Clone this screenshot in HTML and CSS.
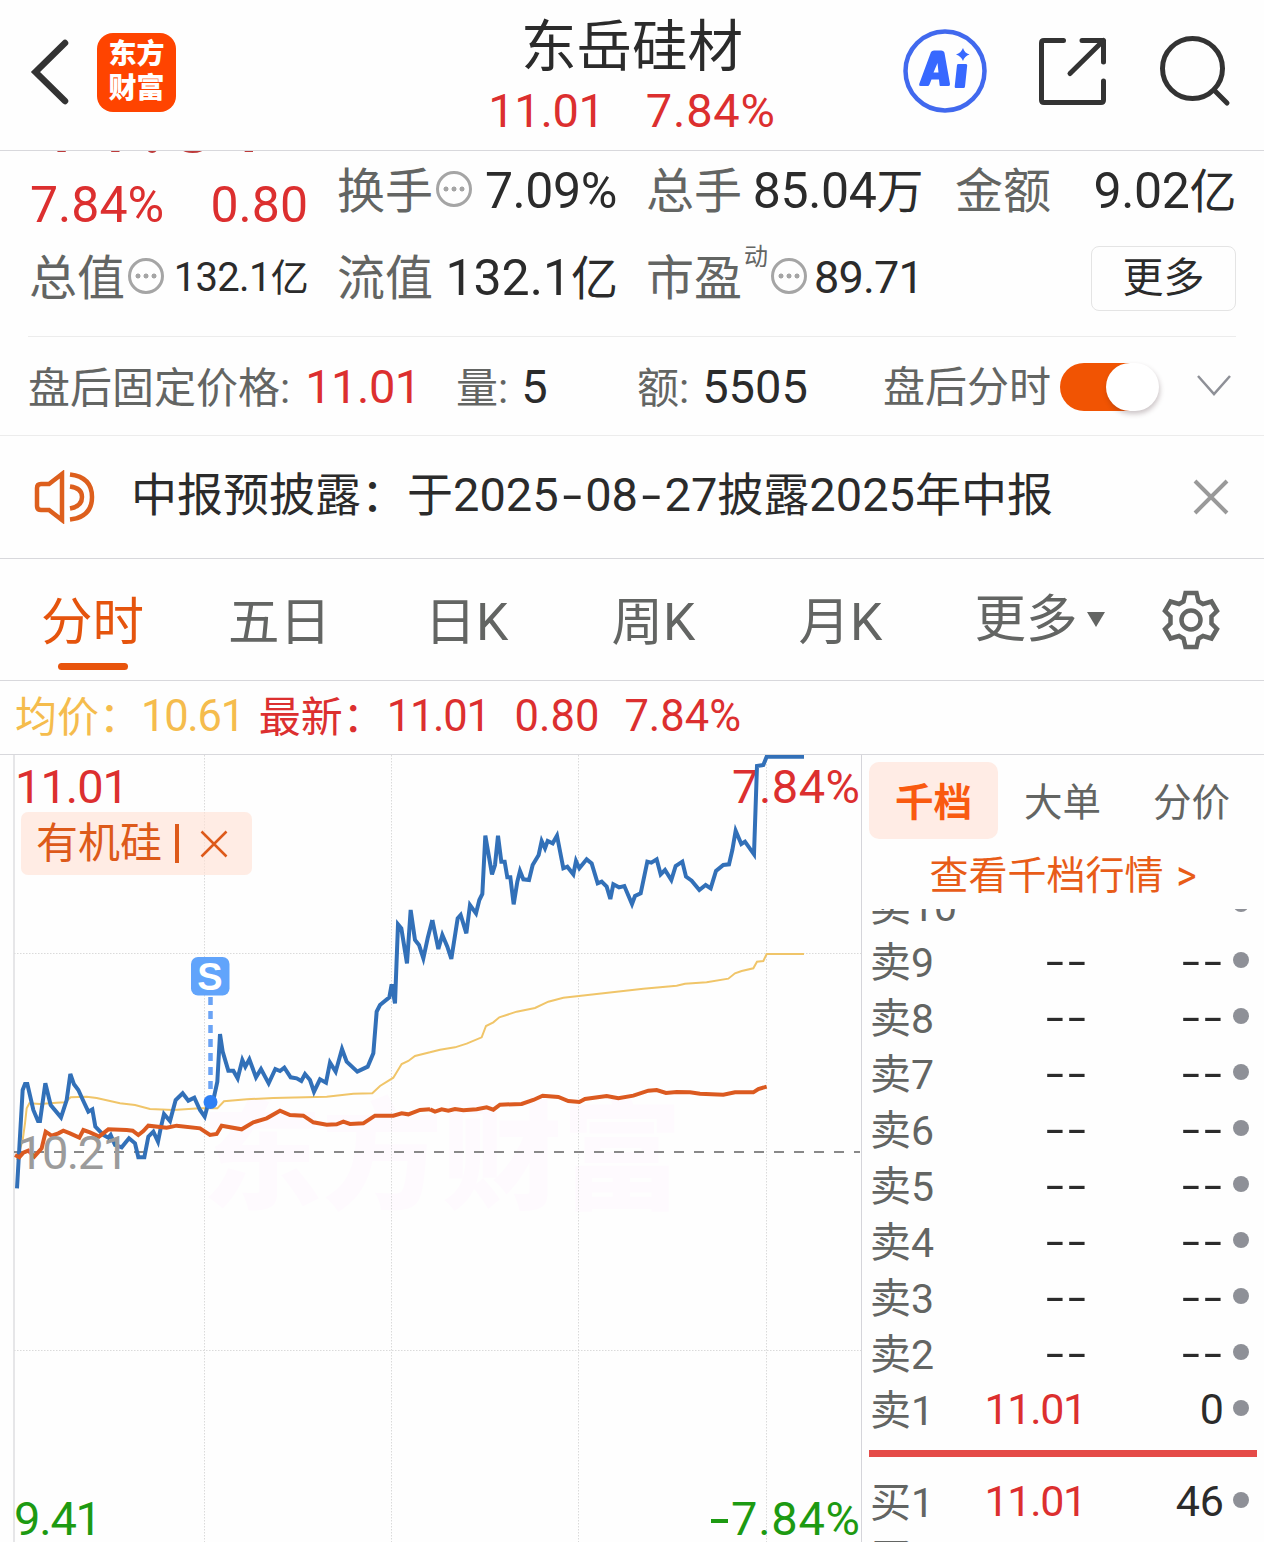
FILE: index.html
```html
<!DOCTYPE html>
<html lang="zh-CN">
<head>
  <meta charset="UTF-8">
  <title>东岳硅材</title>
  <link rel="stylesheet" href="styles.css">
</head>
<body>
  <header class="header">
    <div class="header-left">
      <svg class="back" width="40" height="66" viewBox="0 0 40 66"><path d="M35 4L5.500 33L35 62" fill="none" stroke="#333" stroke-width="6.500" stroke-linecap="round"/></svg>
      <div class="logo"><span>东方</span><span>财富</span></div>
    </div>
    <div class="title">
      <h1>东岳硅材</h1>
      <div class="title-price"><span class="ones">11.01</span><span>7.84%</span></div>
    </div>
    <div class="header-right">
      <svg width="84" height="84" viewBox="0 0 84 84">
        <circle cx="42" cy="42" r="39.5" fill="none" stroke="#4169ee" stroke-width="4.5"/>
        <path fill="#3768ff" fill-rule="evenodd" d="M28 23Q29 21.500 31 21.500H38Q41 21.500 41.500 24L47 55Q47.200 57 45.500 57H37.500Q36.500 57 36.500 55.500L36 50.500H28.500L26.500 55.500Q26 57 24.500 57H17.500Q15.500 57 16.200 55ZM30.500 43.500H35.500L34.500 34Z"/>
        <path fill="#3768ff" d="M54 36Q54.200 35 55.500 35H63Q64.300 35 64.200 36.500L62 57.500Q61.800 59 60.500 59H53Q51.500 59 51.700 57.500ZM60 19Q61.500 24 66.500 25.500Q61.500 27 60 32Q58 27 53 25.500Q58 24 60 19Z"/>
      </svg>
      <svg width="70" height="70" viewBox="0 0 70 70" fill="none" stroke="#333" stroke-width="5" stroke-linecap="round" stroke-linejoin="round">
        <path d="M25.500 4.500H6Q3.500 4.500 3.500 7V64Q3.500 66.500 6 66.500H63Q65.500 66.500 65.500 64V45"/>
        <path d="M44 4.500H65.500V26M65.500 4.500L32 37.500"/>
      </svg>
      <svg width="72" height="72" viewBox="0 0 72 72" fill="none" stroke="#333" stroke-width="5" stroke-linecap="round">
        <circle cx="33.500" cy="33.500" r="30"/><path d="M55 55L68 68"/>
      </svg>
    </div>
  </header>

  <section class="quote">
    <div class="change">
      <div class="big-price"><span>11.01</span></div>
      <div class="change-row"><span>7.84%</span><span>0.80</span></div>
    </div>
    <div class="cell"><label>换手</label><i class="tip"></i><b class="pct">7.09%</b></div>
    <div class="cell third"><label>总手</label><b>85.04<em>万</em></b></div>
    <div class="cell"><label>金额</label><b>9.02<em>亿</em></b></div>
    <div class="cell"><label>总值</label><i class="tip"></i><b class="small">132.1<em>亿</em></b></div>
    <div class="cell"><label>流值</label><b class="wide">132.1<em>亿</em></b></div>
    <div class="cell third"><label>市盈</label><sup>动</sup><i class="tip"></i><b class="mid">89.71</b></div>
    <div class="cell"><button class="more">更多</button></div>
  </section>

  <section class="after">
    <div class="after-price"><label>盘后固定价格:</label><b class="red">11.01</b></div>
    <div class="after-vol"><label>量:</label><b>5</b></div>
    <div class="after-sum"><label>额:</label><b>5505</b></div>
    <label>盘后分时</label>
    <div class="toggle"><div class="knob"></div></div>
    <svg class="down" width="36" height="24" viewBox="0 0 36 24"><path d="M2 2L18 20L34 2" fill="none" stroke="#8e9097" stroke-width="2.500"/></svg>
  </section>

  <section class="notice">
    <svg width="62" height="54" viewBox="0 0 62 54" fill="none" stroke="#dd5f1d" stroke-width="4.500">
      <path d="M28 4V50L15 40H7Q3 40 3 36V18Q3 14 7 14H15Z"/>
      <path d="M36 16.500Q48 18 48 27Q48 36.500 36 38.500M36 4.500Q58 7 58 27Q58 47 36 49.500"/>
    </svg>
    <p>中报预披露：于<span>2025<i>-</i>08<i>-</i>27</span>披露<span>2025</span>年中报</p>
    <svg class="close" width="36" height="36" viewBox="0 0 36 36"><path d="M2 2L34 34M34 2L2 34" stroke="#999" stroke-width="4"/></svg>
  </section>

  <nav class="tabs">
    <a class="tab active">分时</a>
    <a class="tab">五日</a>
    <a class="tab">日K</a>
    <a class="tab">周K</a>
    <a class="tab">月K</a>
    <a class="tab tab-more">更多<i></i></a>
    <svg class="gear" width="60" height="60" viewBox="-30 -30 60 60" fill="none" stroke="#636563" stroke-width="4.500">
      <path d="M-5.500 -27H5.500L7.500 -18.500L12 -16L20.500 -18.500L26 -9L20.500 -3.500V3.500L26 9L20.500 18.500L12 16L7.500 18.500L5.500 27H-5.500L-7.500 18.500L-12 16L-20.500 18.500L-26 9L-20.500 3.500V-3.500L-26 -9L-20.500 -18.500L-12 -16L-7.500 -18.500Z"/>
      <circle r="9.500"/>
    </svg>
  </nav>

  <div class="summary">
    <span class="avg">均价：</span><span class="avg num ones">10.61</span>
    <span class="last">最新：</span><span class="num ones">11.01</span><span class="num">0.80</span><span class="num">7.84%</span>
  </div>

  <main class="main">
    <div class="chart">
      <svg width="862" height="787" viewBox="0 755 862 787">
        <text class="watermark" x="202" y="1200">东方财富</text>
        <g class="grid">
          <path d="M204.500 755V1542M391.500 755V1542M578.500 755V1542M766.500 755V1542"/>
          <path d="M14 953.500H861M14 1350.500H861"/>
        </g>
        <path class="axis" d="M14 755V1542"/>
        <path class="mid-line" d="M14 1152H860"/>
        <text class="label up" x="15" y="803" textLength="114">11.01</text>
        <text class="label up" x="732" y="803" textLength="128">7.84%</text>

        <!-- morning session -->
        <g class="lines" transform="translate(0 750) scale(.33333)">
          <polyline class="avg-line" points="51,1230 68,1170 75,1120 80,1075 88,1060 120,1062 170,1058 195,1057 212,1042 260,1040 290,1044 360,1060 405,1065 450,1077 520,1080 600,1075 652,1075 672,1054 740,1048 820,1044 980,1040 1060,1031 1117,1030 1140,1008 1180,983 1205,942 1225,933 1245,918 1290,907"/>
          <polyline class="price-line" points="51,1315 68,1020 75,1002 82,1002 100,1080 114,1113 120,1113 136,1000 152,1065 183,1102 200,1050 211,972 222,1003 235,1020 250,1053 265,1085 277,1078 286,1130 310,1155 325,1163 332,1155 345,1185 365,1192 387,1165 405,1180 415,1222 433,1222 445,1160 460,1145 474,1175 482,1135 492,1092 510,1113 527,1050 548,1030 565,1052 583,1043 600,1080 614,1100 625,1060 640,1050 652,995 660,852 668,905 685,962 700,962 713,985 727,930 736,950 748,928 768,982 783,957 806,1000 826,957 840,963 853,953 872,982 890,985 904,993 915,972 930,990 942,1025 960,988 978,998 990,938 1007,965 1026,897 1040,935 1072,965 1103,950 1120,910 1130,785 1140,765 1168,742 1175,703 1185,760 1194,523 1204,535 1221,640 1232,480 1245,570 1257,585 1270,625 1283,565 1297,510"/>
          <polyline class="index-line" points="45,1215 58,1222 70,1208 85,1202 103,1220 125,1195 137,1145 155,1157 175,1150 190,1142 210,1150 238,1163 250,1140 270,1147 297,1160 325,1138 380,1140 398,1142 415,1155 430,1143 445,1127 500,1133 530,1127 600,1135 630,1155 650,1152 665,1127 725,1138 760,1117 800,1105 840,1082 870,1095 910,1097 940,1117 980,1124 1010,1123 1030,1115 1050,1122 1090,1120 1125,1097 1180,1097 1205,1090 1225,1093 1260,1080 1290,1078"/>
        </g>
        <!-- afternoon session -->
        <g class="lines" transform="translate(430 750) scale(.33333)">
          <polyline class="avg-line" points="0,907 30,899 75,892 110,881 155,862 168,828 190,817 208,802 260,785 315,774 355,755 400,743 500,732 640,716 740,707 765,701 830,697 895,686 915,670 935,663 970,655 981,635 1000,633 1010,612 1122,612"/>
          <polyline class="price-line" points="7,510 25,597 37,555 52,590 64,627 83,505 92,495 109,550 120,465 138,490 148,450 157,432 166,257 186,373 195,345 204,257 214,335 224,335 232,382 241,382 251,463 262,395 270,363 280,388 297,390 308,345 326,315 335,273 345,295 353,273 368,280 381,257 400,355 412,350 430,373 438,333 448,355 470,328 485,340 503,400 515,395 530,410 541,447 550,403 567,412 583,408 606,462 615,438 632,430 652,335 664,338 680,328 692,373 705,360 724,390 737,348 757,335 768,380 785,392 808,420 827,405 842,415 858,363 880,345 897,343 907,300 917,242 934,282 945,275 972,313 981,48 1000,45 1010,20 1122,20"/>
          <polyline class="index-line" points="0,1078 15,1085 35,1078 55,1082 75,1077 100,1081 140,1078 170,1072 190,1079 210,1064 275,1062 310,1050 338,1037 385,1041 415,1053 448,1056 465,1047 530,1038 565,1045 610,1037 655,1022 680,1020 708,1029 740,1026 780,1027 810,1031 880,1034 915,1027 970,1027 985,1017 1010,1010"/>
        </g>

        <text class="label flat" x="17" y="1169" textLength="112">10.21</text>
        <text class="label down-text" x="14" y="1535" textLength="88">9.41</text>
        <text class="label down-text" x="731" y="1535" textLength="129">7.84%</text>
        <path d="M711 1521H728" stroke="#1d9a12" stroke-width="4"/>

        <!-- sell mark -->
        <path d="M210.500 997V1095" stroke="#6aa3f5" stroke-width="4.500" stroke-dasharray="8 6"/>
        <circle cx="210.500" cy="1102" r="7" fill="#2f80f5"/>
        <rect x="191" y="957" width="38.500" height="38.500" rx="7" fill="#61a4fb"/>
        <text class="mark" x="210" y="990" text-anchor="middle">S</text>
      </svg>
      <div class="tag"><span>有机硅</span><i></i><svg width="28" height="28" viewBox="0 0 28 28"><path d="M1.500 1.500L26.500 26.500M26.500 1.500L1.500 26.500" stroke="#dd5a1a" stroke-width="2.500"/></svg></div>
    </div>

    <aside class="book">
      <div class="book-tabs"><a class="on">千档</a><a>大单</a><a>分价</a></div>
      <a class="book-link">查看千档行情 <span>&gt;</span></a>
      <div class="levels">
        <div class="level first"><span>卖10</span><b class="none"><i>-</i><i>-</i></b><b class="none"><i>-</i><i>-</i></b></div>
        <div class="level"><span>卖9</span><b class="none"><i>-</i><i>-</i></b><b class="none"><i>-</i><i>-</i></b></div>
        <div class="level"><span>卖8</span><b class="none"><i>-</i><i>-</i></b><b class="none"><i>-</i><i>-</i></b></div>
        <div class="level"><span>卖7</span><b class="none"><i>-</i><i>-</i></b><b class="none"><i>-</i><i>-</i></b></div>
        <div class="level"><span>卖6</span><b class="none"><i>-</i><i>-</i></b><b class="none"><i>-</i><i>-</i></b></div>
        <div class="level"><span>卖5</span><b class="none"><i>-</i><i>-</i></b><b class="none"><i>-</i><i>-</i></b></div>
        <div class="level"><span>卖4</span><b class="none"><i>-</i><i>-</i></b><b class="none"><i>-</i><i>-</i></b></div>
        <div class="level"><span>卖3</span><b class="none"><i>-</i><i>-</i></b><b class="none"><i>-</i><i>-</i></b></div>
        <div class="level"><span>卖2</span><b class="none"><i>-</i><i>-</i></b><b class="none"><i>-</i><i>-</i></b></div>
        <div class="level"><span>卖1</span><b class="red ones">11.01</b><b>0</b></div>
        <div class="split"></div>
        <div class="level"><span>买1</span><b class="red ones">11.01</b><b>46</b></div>
        <div class="level"><span>买2</span><b></b><b></b></div>
      </div>
    </aside>
  </main>
</body>
</html>
```

FILE: styles.css
```css
* {
  box-sizing: border-box;
}
body {
  margin: 0;
  width: 1264px;
  height: 1542px;
  overflow: hidden;
  background: #fefefe;
  color: #2b2b2b;
  font-family: Roboto, "Noto Sans CJK SC", sans-serif;
}
b, i, em {
  font-weight: normal;
  font-style: normal;
}
svg {
  display: block;
  flex: none;
}
label {
  color: #636563;
  white-space: nowrap;
}
.red {
  color: #dc2f2f;
}
.ones {
  letter-spacing: -1.300px;
}

/* header */
.header {
  display: grid;
  grid-template-columns: 400px 464px 400px;
  height: 151px;
  border-bottom: 1px solid #d8d8dc;
}
.header-left {
  display: flex;
  align-items: center;
  height: 144px;
  padding-left: 30px;
}
.logo {
  display: flex;
  flex-direction: column;
  justify-content: center;
  align-items: center;
  width: 79px;
  height: 79px;
  margin-left: 27px;
  border-radius: 16px;
  background: #ff4400;
  color: #fff;
  font-size: 28px;
  font-weight: 900;
  line-height: 34px;
}
.title {
  text-align: center;
}
.title h1 {
  margin: 0;
  padding-top: 11px;
  font-size: 55.5px;
  font-weight: normal;
  line-height: 74px;
}
.title-price {
  display: flex;
  justify-content: center;
  gap: 41px;
  color: #dc2f2f;
  font-size: 47px;
  line-height: 52px;
  letter-spacing: 0.8px;
}
.title-price .ones {
  letter-spacing: -0.300px;
}
.header-right {
  display: flex;
  align-items: center;
  height: 142px;
  padding-left: 39px;
}
.header-right svg + svg {
  margin-left: 51px;
}

/* quote */
.quote {
  display: grid;
  grid-template-columns: 278px 279px 279px 280px;
  grid-template-rows: 80px 80px;
  row-gap: 7px;
  column-gap: 30px;
  height: 186px;
  margin: 0 28px;
  padding-left: 2px;
  border-bottom: 1px solid #ececec;
  font-size: 50px;
}
.change {
  color: #dc2f2f;
}
.big-price {
  display: flex;
  align-items: flex-end;
  height: 3px;
  overflow: hidden;
  color: #bd3b3b;
  font-size: 92px;
  letter-spacing: 2px;
  padding-left: 3px;
}
.big-price span {
  line-height: 66px;
}
.change-row {
  display: flex;
  justify-content: space-between;
  padding-top: 28px;
  line-height: 46px;
}
.cell {
  display: flex;
  align-items: center;
  line-height: 80px;
  white-space: nowrap;
}
.cell.third {
  padding-right: 3px;
}
.cell label {
  margin: 2px 0 0 -1px;
  font-size: 48px;
}
.cell b {
  margin-left: auto;
  letter-spacing: -0.4px;
}
.cell em {
  font-size: 47px;
}
.cell b.wide {
  letter-spacing: 0;
  margin-right: -1px;
}
.cell b.small {
  font-size: 40px;
  letter-spacing: -0.7px;
}
.cell .small em {
  font-size: 38px;
}
.cell b.mid {
  font-size: 45px;
  letter-spacing: -0.8px;
}
.cell sup {
  align-self: flex-start;
  margin-left: 2px;
  font-size: 24px;
  line-height: 39px;
  color: #636563;
}
.tip {
  flex: none;
  width: 36px;
  height: 36px;
  margin: -4px 0 0 3px;
  border: 3px solid #a5a5a5;
  border-radius: 50%;
  background:
    radial-gradient(circle at 7px 15px, #a5a5a5 2.200px, transparent 2.800px),
    radial-gradient(circle at 15px 15px, #a5a5a5 2.200px, transparent 2.800px),
    radial-gradient(circle at 23px 15px, #a5a5a5 2.200px, transparent 2.800px);
}
.more {
  width: 145px;
  height: 65px;
  margin-left: auto;
  padding: 0 0 8px;
  border: 1.500px solid #e4e4e4;
  border-radius: 8px;
  background: none;
  color: #2b2b2b;
  font: 41px "Noto Sans CJK SC", sans-serif;
  line-height: 55px;
}

/* after-hours */
.after {
  display: flex;
  align-items: center;
  height: 99px;
  padding: 2px 32px 0 28px;
  border-bottom: 1px solid #ececec;
  font-size: 47px;
  line-height: 47px;
}
.after label {
  font-size: 42px;
}
.after b {
  margin-left: 13px;
}
.after-price b {
  margin-left: 15px;
  letter-spacing: -0.5px;
}
.after-price {
  width: 428px;
}
.after-vol {
  width: 181px;
}
.after-sum {
  width: 246px;
}
.toggle {
  width: 98px;
  height: 48px;
  margin-left: 9px;
  padding-left: 46px;
  border-radius: 24px;
  background: linear-gradient(90deg, #f15403 75px, transparent 75px);
}
.knob {
  width: 53px;
  height: 48px;
  border-radius: 26px;
  background: #fff;
  box-shadow: 1px 3px 5px rgba(60, 30, 40, 0.25);
}
.down {
  margin: -3px 0 0 auto;
}

/* notice */
.notice {
  display: flex;
  align-items: center;
  height: 123px;
  padding: 0 35px 0 34px;
  border-bottom: 1px solid #d8d8dc;
}
.notice p {
  margin: -4px 0 0 35px;
  font-size: 46px;
  line-height: 46px;
  white-space: nowrap;
}
.notice p span {
  font-size: 47px;
}
.notice p i {
  display: inline-block;
  width: 26.500px;
  text-align: center;
  transform: scaleX(1.500);
}
.notice .close {
  margin-left: auto;
}

/* period tabs */
.tabs {
  display: flex;
  height: 122px;
  border-bottom: 1px solid #d8d8dc;
}
.tab {
  display: flex;
  flex-direction: column;
  align-items: center;
  width: 187px;
  color: #636563;
  font-size: 51.500px;
  line-height: 127px;
}
.active {
  margin-left: -1px;
  color: #e5540d;
}
.active::after {
  content: "";
  width: 70px;
  height: 7px;
  margin-top: -23px;
  border-radius: 4px;
  background: #e8540c;
}
.tab-more {
  flex-direction: row;
  justify-content: center;
  margin-left: 12px;
}
.tab-more i {
  margin-left: 9px;
  border: 9px solid transparent;
  border-top: 15px solid #636563;
  border-bottom: 0;
}
.gear {
  margin: 31px 0 0 28px;
}

/* line above the chart */
.summary {
  display: flex;
  height: 74px;
  padding-left: 15px;
  border-bottom: 1px solid #d8d8dc;
  color: #dc2f2f;
  font-size: 42px;
  line-height: 74px;
}
.summary .num {
  margin-right: 25px;
  font-size: 43.500px;
  line-height: 71px;
}
.summary .avg {
  color: #f5bc4d;
}
.summary .avg.num {
  margin-right: 15px;
}
.summary .last {
  margin-right: 2px;
}

.main {
  display: flex;
  height: 787px;
}
.chart {
  position: relative;
  width: 862px;
  border-right: 1px solid #d5d5da;
}
.grid path {
  stroke: #dadada;
  stroke-dasharray: 1.500 1.500;
}
.axis {
  stroke: #dedee0;
  stroke-width: 1.500;
}
.mid-line {
  stroke: #888;
  stroke-width: 2;
  stroke-dasharray: 10 10;
}
.lines polyline {
  fill: none;
}
.lines .price-line {
  stroke: #3270b8;
  stroke-width: 12;
}
.lines .avg-line {
  stroke: #f0c569;
  stroke-width: 6;
}
.lines .index-line {
  stroke: #db5a20;
  stroke-width: 12;
}
.label {
  font-size: 47px;
}
.up {
  fill: #dc2f2f;
}
.flat {
  fill: #9b9b9b;
}
.down-text {
  fill: #1d9a12;
}
.mark {
  fill: #fff;
  font: bold 38px "Liberation Sans", sans-serif;
}
.watermark {
  fill: #fefafe;
  font-size: 120px;
  font-weight: 900;
}
.tag {
  position: absolute;
  left: 21px;
  top: 57px;
  display: flex;
  align-items: center;
  width: 231px;
  height: 63px;
  padding-left: 15px;
  border-radius: 7px;
  background: rgba(255, 226, 214, 0.65);
  color: #dd5a1a;
  font-size: 42px;
  line-height: 44px;
}
.tag i {
  width: 4px;
  height: 39px;
  margin: 0 21px 0 13px;
  background: #dd5a1a;
}

/* order book */
.book {
  width: 402px;
  padding: 7px 7px 0;
}
.book-tabs {
  display: flex;
  height: 77px;
  color: #636563;
  font-size: 38.500px;
  line-height: 82px;
  text-align: center;
}
.book-tabs a {
  width: 129px;
}
.book-tabs .on {
  border-radius: 10px;
  background: #ffece5;
  color: #f95a10;
  font-weight: bold;
}
.book-link {
  display: block;
  height: 70px;
  color: #e85c18;
  font-size: 39px;
  line-height: 75px;
  text-align: center;
}
.book-link span {
  display: inline-block;
  margin-left: 3px;
  transform: scaleY(1.100);
}
.levels {
  height: 633px;
  overflow: hidden;
}
.level {
  display: grid;
  grid-template-columns: 88px 128px 138px 16px;
  grid-template-rows: 56px;
  align-items: center;
  height: 56px;
  padding-left: 1px;
  font-size: 43px;
  line-height: 56px;
}
.level.first {
  margin-top: -32px;
}
.level::after {
  content: "";
  width: 16px;
  height: 16px;
  margin: -2px 0 0 9px;
  border-radius: 50%;
  background: #8e9097;
}
.level span {
  margin-top: 4px;
  color: #636563;
  font-size: 41px;
  white-space: nowrap;
}
.level b {
  text-align: right;
}
.level .none {
  display: flex;
  justify-content: flex-end;
  margin-right: -2px;
}
.level .none + .none {
  margin-right: 0;
}
.none i {
  width: 22px;
  text-align: center;
  transform: scaleX(1.500);
}
.split {
  height: 7px;
  margin: 13px 0 16px;
  background: #e54b48;
}
```
